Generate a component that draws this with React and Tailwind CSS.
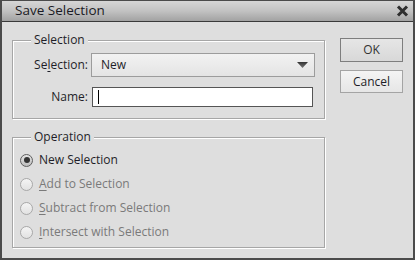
export default function App() {
  const font = { fontFamily: '"Open Sans", "Noto Sans", sans-serif' };
  const Radio = ({ checked, u, rest, disabled }) => (
    <div className="flex items-center h-[24px]">
      <div
        className={
          "w-[13px] h-[13px] rounded-full border flex items-center justify-center shrink-0 " +
          (checked
            ? "border-[#5e5e5e] bg-gradient-to-b from-[#e4e4e4] to-[#bdbdbd]"
            : "border-[#a8a8a8] bg-gradient-to-b from-[#f4f4f4] to-[#e2e2e2]")
        }
      >
        {checked && <div className="w-[6px] h-[6px] rounded-full bg-[#333]" />}
      </div>
      <span className={"ml-[6px] text-[12px] leading-none " + (disabled ? "text-[#7a7a7a]" : "text-[#1e1e28]")}>
        {u ? <span className="underline underline-offset-[2px]">{u}</span> : null}
        {rest}
      </span>
    </div>
  );
  return (
    <div
      style={font}
      className="w-[415px] h-[260px] flex flex-col bg-[#dedede] border-x-2 border-b-2 border-t border-[#4b4b4b] text-[#1e1e28]"
    >
      <div className="h-[21px] shrink-0 flex items-center justify-between pl-[13px] pr-[4px] bg-gradient-to-b from-[#d6d6d6] via-[#c2c2c2] to-[#a2a2a2] border-b border-[#3a3a3a]">
        <span className="text-[13.5px] text-[#1a1a24] leading-none">Save Selection</span>
        <svg width="13" height="12" viewBox="0 0 13 12">
          <path d="M2 1.5 L11 10.5 M11 1.5 L2 10.5" stroke="#2e2e2e" strokeWidth="3" />
        </svg>
      </div>
      <div className="flex flex-1 pl-[10px]">
        <div className="w-[313px] flex flex-col">
          <fieldset className="mt-[10px] h-[87px] border border-[#a6a6a6] shadow-[inset_1px_1px_0_#fff,1px_1px_0_#fff] px-0 pb-0">
            <legend className="ml-[18px] px-[3px] bg-[#dedede] text-[12px] leading-[16px]">Selection</legend>
            <div className="grid grid-cols-[75px_1fr] items-center gap-x-[3px] mt-[5px]">
              <span className="text-right text-[12px]">
                Se<span className="underline underline-offset-[2px]">l</span>ection:
              </span>
              <div className="h-[24px] w-[224px] border border-[#9c9c9c] bg-gradient-to-b from-[#f2f2f2] to-[#e4e4e4] flex items-center justify-between pl-[9px] pr-[6px]">
                <span className="text-[12px]">New</span>
                <svg width="11" height="6" viewBox="0 0 11 6">
                  <defs>
                    <linearGradient id="ag" x1="0" y1="0" x2="0" y2="1">
                      <stop offset="0" stopColor="#333" />
                      <stop offset="1" stopColor="#777" />
                    </linearGradient>
                  </defs>
                  <path d="M0 0 H11 L5.5 6 Z" fill="url(#ag)" />
                </svg>
              </div>
              <span className="text-right text-[12px] mt-[10px]">Name:</span>
              <div className="mt-[10px] ml-[1px] h-[20px] w-[221px] border border-[#555] bg-white flex items-center pl-[5px]">
                <div className="w-[1px] h-[14px] bg-black" />
              </div>
            </div>
          </fieldset>
          <fieldset className="mt-[10px] h-[119px] border border-[#a6a6a6] shadow-[inset_1px_1px_0_#fff,1px_1px_0_#fff] px-0 pb-0">
            <legend className="ml-[18px] px-[3px] bg-[#dedede] text-[12px] leading-[16px]">Operation</legend>
            <div className="flex flex-col pl-[7px] mt-[3px]">
              <Radio checked rest="New Selection" />
              <Radio disabled u="A" rest="dd to Selection" />
              <Radio disabled u="S" rest="ubtract from Selection" />
              <Radio disabled u="I" rest="ntersect with Selection" />
            </div>
          </fieldset>
        </div>
        <div className="ml-[15px] mt-[16px] flex flex-col gap-[8px]">
          <button className="w-[63px] h-[24px] border border-[#7e7e7e] bg-gradient-to-b from-[#e6e6e6] to-[#d8d8d8] text-[12px] text-[#333]">
            OK
          </button>
          <button className="w-[63px] h-[23px] border border-[#a4a4a4] bg-gradient-to-b from-[#f4f4f4] to-[#e6e6e6] text-[12px]">
            Cancel
          </button>
        </div>
      </div>
    </div>
  );
}
